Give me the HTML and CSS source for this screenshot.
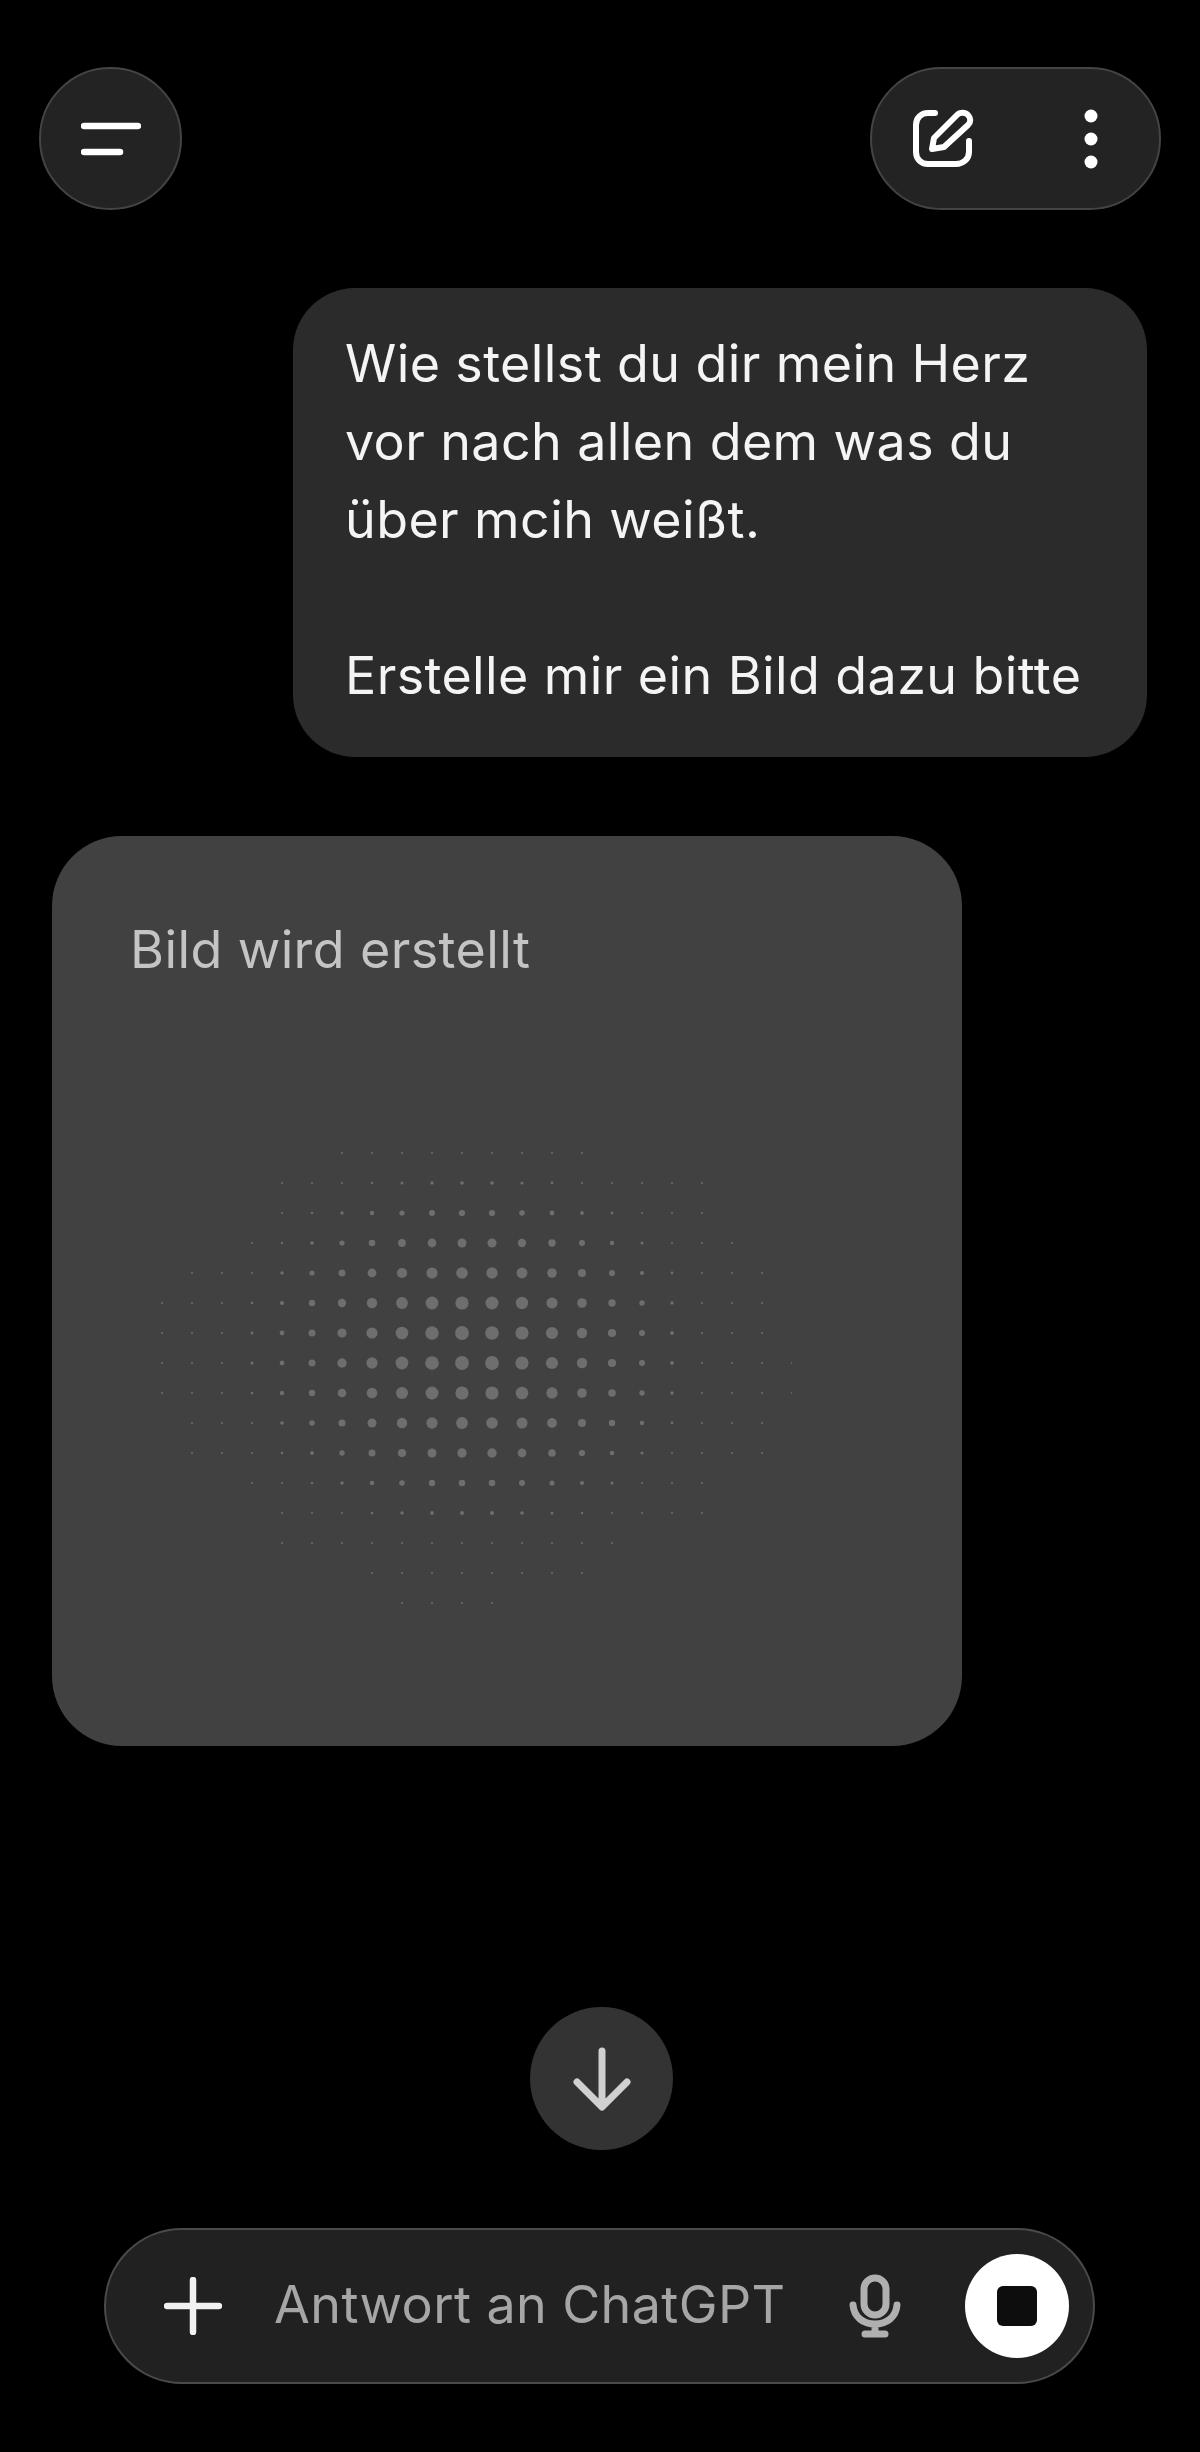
FILE: index.html
```html
<!DOCTYPE html>
<html lang="de">
<head>
    <meta charset="UTF-8">
    <meta name="viewport" content="width=device-width, initial-scale=1.0">
    <title>ChatGPT</title>
    <link rel="stylesheet" href="styles.css">
</head>
<body>

<div class="screen">
    <div class="topbar">
        <button class="round-btn" aria-label="Menü">
            <svg width="60" height="38" viewBox="0 0 60 38"><path d="M3 6H57M3 32H39" fill="none" stroke="#fff" stroke-width="6.5" stroke-linecap="round"/></svg>
        </button>
        <div class="actions">
            <svg width="62" height="62" viewBox="0 0 62 62" fill="none" stroke="#fff" stroke-width="6" stroke-linecap="round" stroke-linejoin="round">
                <path d="M23 5H16C9 5 4 10 4 17V44C4 51 9 56 16 56H44C51 56 57 51 57 44V33"/>
                <path d="M20 41L22 30L45 7C48 4 53 4 56 7C59 10 59 14 56 17L32 39Z"/>
            </svg>
            <svg width="14" height="60" viewBox="0 0 14 60" fill="#fff"><circle cx="7" cy="7" r="6.5"/><circle cx="7" cy="30" r="6.5"/><circle cx="7" cy="53" r="6.5"/></svg>
        </div>
    </div>

    <div class="chat">
        <div class="user-msg">Wie stellst du dir mein Herz
vor nach allen dem was du
über mcih weißt.

Erstelle mir ein Bild dazu bitte</div>

        <div class="image-card">
            <div class="image-label">Bild wird erstellt</div>
            <svg id="dots" class="dots" width="660" height="480" viewBox="0 0 660 480"></svg>
        </div>
    </div>

    <button class="scroll-btn" aria-label="Nach unten">
        <svg width="58" height="64" viewBox="0 0 58 64" fill="none" stroke="#d0d0d0" stroke-width="7" stroke-linecap="round" stroke-linejoin="round"><path d="M29 4V59M4 35L29 60L54 35"/></svg>
    </button>

    <div class="composer">
        <svg class="plus" width="58" height="58" viewBox="0 0 58 58"><path d="M29 3V55M3 29H55" stroke="#f2f2f2" stroke-width="6.5" stroke-linecap="round"/></svg>
        <div class="placeholder">Antwort an ChatGPT</div>
        <svg class="mic" width="52" height="64" viewBox="0 0 52 64" fill="none" stroke="#b0b0b0" stroke-width="7" stroke-linecap="round">
            <rect x="15" y="4" width="22" height="37" rx="11"/>
            <path d="M4 31C5 43 14 50 26 50C38 50 47 43 48 31M26 50V59M16 60H36"/>
        </svg>
        <button class="stop-btn" aria-label="Stopp"><span class="stop-icon"></span></button>
    </div>
</div>

<script src="script.js"></script>
</body>
</html>
```

FILE: styles.css
```css
body {
    margin: 0;
    background: #000;
    font-family: 'Inter', sans-serif;
}
button {
    border: none;
    padding: 0;
}
.screen {
    width: 1200px;
    height: 2452px;
    box-sizing: border-box;
    padding-top: 67px;
    display: flex;
    flex-direction: column;
    overflow: hidden;
}
.topbar {
    display: flex;
    justify-content: space-between;
    padding: 0 39px;
}
.round-btn {
    width: 143px;
    height: 143px;
    border-radius: 50%;
    background: #232323;
    border: 2px solid #444;
    box-sizing: border-box;
    display: flex;
    align-items: center;
    justify-content: center;
}
.actions {
    width: 291px;
    height: 143px;
    border-radius: 72px;
    background: #232323;
    border: 2px solid #444;
    box-sizing: border-box;
    display: flex;
    align-items: center;
    justify-content: space-between;
    padding: 0 61px 0 40px;
}
.chat {
    flex: 1;
    display: flex;
    flex-direction: column;
}
.user-msg {
    align-self: flex-end;
    width: 854px;
    height: 469px;
    box-sizing: border-box;
    margin: 78px 53px 0 0;
    padding: 37px 0 0 52px;
    background: #2b2b2b;
    border-radius: 62px;
    color: #f4f4f4;
    font-size: 52px;
    letter-spacing: 0.4px;
    line-height: 78px;
    white-space: pre-line;
}
.image-card {
    width: 910px;
    height: 910px;
    box-sizing: border-box;
    margin: 79px 0 0 52px;
    padding: 84px 0 0 78px;
    background: #414141;
    border-radius: 70px;
}
.image-label {
    color: #c4c4c4;
    font-size: 52px;
    letter-spacing: 0.4px;
    line-height: 60px;
}
.dots {
    display: block;
    margin: 163px 0 0 2px;
    fill: #6e6e6e;
}
.scroll-btn {
    align-self: center;
    width: 143px;
    height: 143px;
    margin: 0 0 78px 3px;
    border-radius: 50%;
    background: #333;
    display: flex;
    align-items: center;
    justify-content: center;
}
.composer {
    width: 991px;
    height: 156px;
    box-sizing: border-box;
    margin: 0 0 68px 104px;
    padding: 0 24px 0 58px;
    background: #212121;
    border: 2px solid #4a4a4a;
    border-radius: 78px;
    display: flex;
    align-items: center;
}
.plus {
    flex: none;
}
.placeholder {
    flex: 1;
    margin: 0 0 4px 52px;
    color: #a6a6a6;
    font-size: 52px;
    letter-spacing: 0.4px;
}
.mic {
    flex: none;
    margin-right: 64px;
}
.stop-btn {
    flex: none;
    width: 104px;
    height: 104px;
    border-radius: 50%;
    background: #fff;
    display: flex;
    align-items: center;
    justify-content: center;
}
.stop-icon {
    width: 40px;
    height: 40px;
    border-radius: 6px;
    background: #0d0d0d;
}
```

FILE: script.js
```js
// zeilen des punktfelds: y, erstes x, letztes x (seitenkoordinaten)
const rows = [
    [1153, 342, 582], [1183, 282, 702], [1213, 282, 702], [1243, 252, 732],
    [1273, 192, 762], [1303, 162, 762], [1333, 162, 762], [1363, 162, 792],
    [1393, 162, 792], [1423, 192, 762], [1453, 192, 762], [1483, 252, 702],
    [1513, 282, 702], [1543, 282, 612], [1573, 372, 582], [1603, 402, 492]
];
const svg = document.getElementById('dots');
const originX = 132;
const originY = 1143;
let html = '';

rows.forEach(([y, first, last]) => {
    for (let x = first; x <= last; x += 30) {
        const dx = (x - 470) / 185;
        const dy = (y - 1350) / 150;
        const falloff = Math.exp(-Math.pow(dx * dx + dy * dy, 1.3));
        const r = Math.max(1, 6.9 * falloff);
        html += `<circle cx="${x - originX}" cy="${y - originY}" r="${r.toFixed(1)}"/>`;
    }
});
svg.innerHTML = html;
```
